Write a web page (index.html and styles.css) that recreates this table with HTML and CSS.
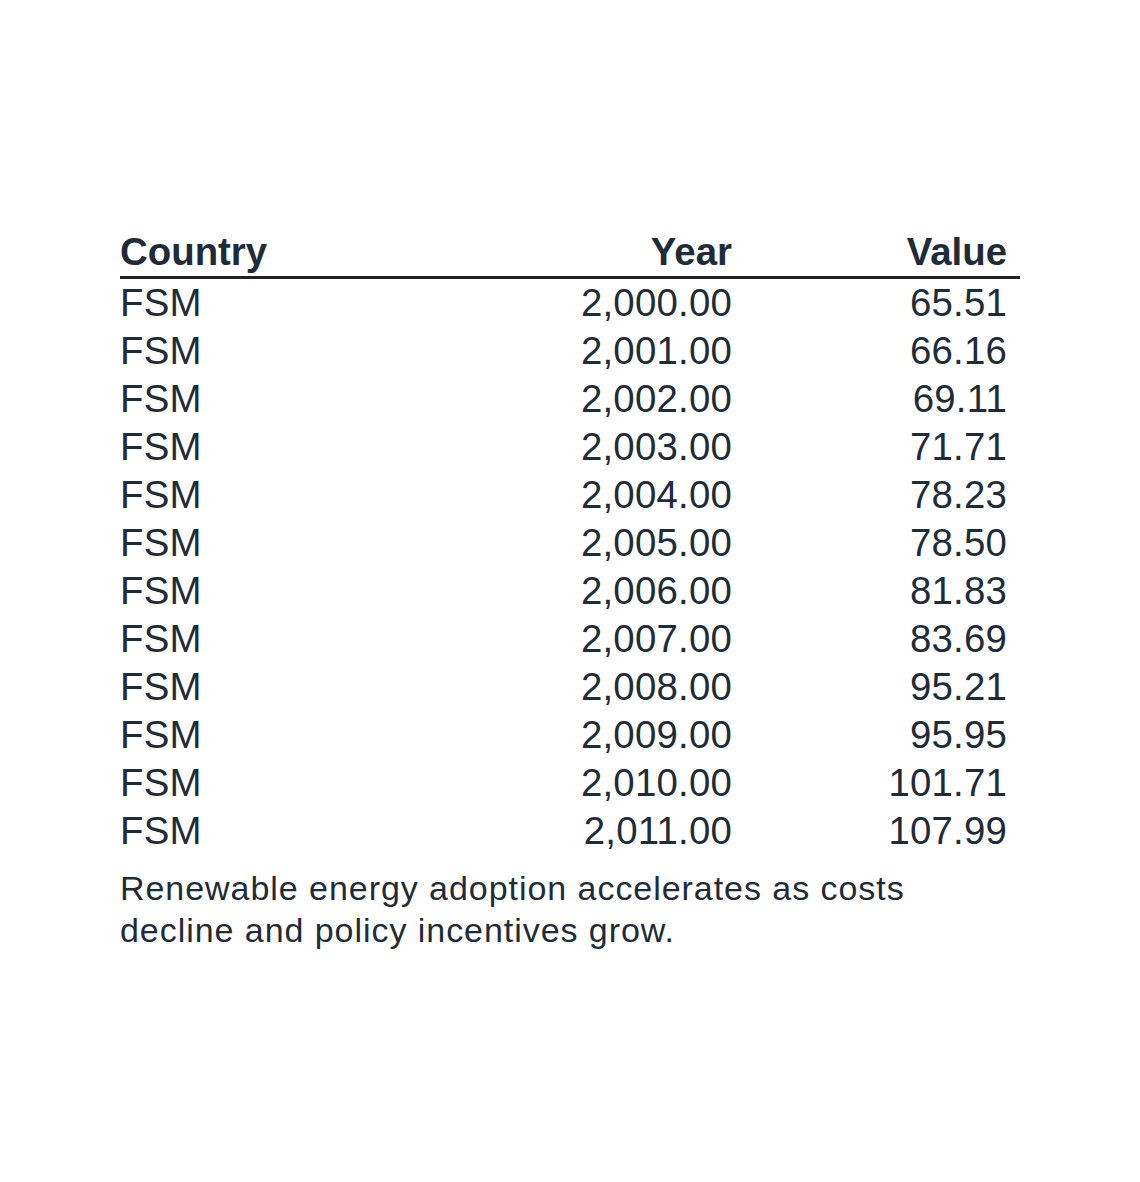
FILE: index.html
```html
<!DOCTYPE html>
<html>
<head>
<meta charset="utf-8">
<link rel="stylesheet" href="styles.css">
</head>
<body>
<div class="page">
<table class="data">
<caption>Renewable energy adoption accelerates as costs decline and policy incentives grow.</caption>
<thead>
<tr><th class="c-country">Country</th><th class="c-year">Year</th><th class="c-value">Value</th></tr>
</thead>
<tbody>
<tr><td>FSM</td><td class="num">2,000.00</td><td class="num">65.51</td></tr>
<tr><td>FSM</td><td class="num">2,001.00</td><td class="num">66.16</td></tr>
<tr><td>FSM</td><td class="num">2,002.00</td><td class="num">69.11</td></tr>
<tr><td>FSM</td><td class="num">2,003.00</td><td class="num">71.71</td></tr>
<tr><td>FSM</td><td class="num">2,004.00</td><td class="num">78.23</td></tr>
<tr><td>FSM</td><td class="num">2,005.00</td><td class="num">78.50</td></tr>
<tr><td>FSM</td><td class="num">2,006.00</td><td class="num">81.83</td></tr>
<tr><td>FSM</td><td class="num">2,007.00</td><td class="num">83.69</td></tr>
<tr><td>FSM</td><td class="num">2,008.00</td><td class="num">95.21</td></tr>
<tr><td>FSM</td><td class="num">2,009.00</td><td class="num">95.95</td></tr>
<tr><td>FSM</td><td class="num">2,010.00</td><td class="num">101.71</td></tr>
<tr><td>FSM</td><td class="num">2,011.00</td><td class="num">107.99</td></tr>
</tbody>
</table>
</div>
</body>
</html>
```
FILE: styles.css
```css
html, body {
  margin: 0;
  padding: 0;
  background: #ffffff;
}
.page {
  padding: 228px 120px 0 120px;
  font-family: "Liberation Sans", Arial, sans-serif;
  color: #1f2c38;
}
.data {
  width: 900px;
  border-collapse: collapse;
  font-size: 38.4px;
  line-height: 48px;
  letter-spacing: 0.2px;
}
.data caption {
  caption-side: bottom;
  text-align: left;
  font-size: 34px;
  line-height: 42px;
  letter-spacing: 0.95px;
  padding-top: 12px;
  padding-right: 60px;
}
.data th, .data td {
  padding: 0 13px 0 0;
  white-space: nowrap;
}
.data thead th {
  font-weight: bold;
  border-bottom: 3px solid #222222;
  letter-spacing: 0;
}
.c-country { text-align: left; }
.c-year { text-align: right; width: 272px; }
.c-value { text-align: right; width: 262px; }
.num { text-align: right; }
```
